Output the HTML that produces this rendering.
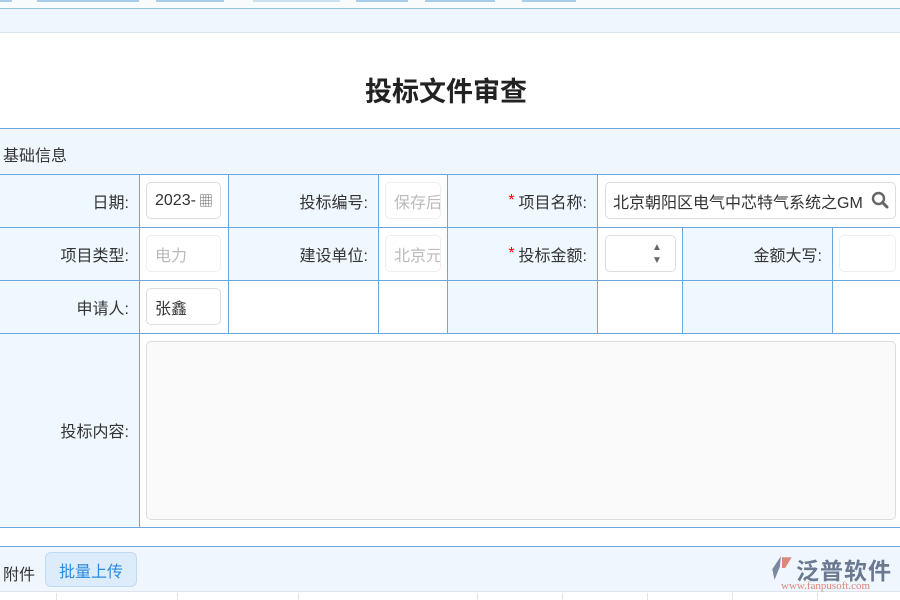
<!DOCTYPE html>
<html><head><meta charset="utf-8"><style>
*{box-sizing:border-box;margin:0;padding:0}
body{width:900px;height:600px;overflow:hidden;background:#fff;font-family:"Liberation Sans","Noto Sans CJK SC",sans-serif;font-size:16px;color:#333;position:relative}
.a{position:absolute}
.lbl{position:absolute;background:#eff7ff;text-align:right;padding-right:10px;display:flex;align-items:center;justify-content:flex-end}
.inp{position:absolute;border:1px solid #ddd;border-radius:5px;background:#fff;display:flex;align-items:center;padding-left:8px;overflow:hidden;white-space:nowrap}
.hl{position:absolute;height:1px;background:#6aa7dc;left:0;width:900px}
.vl{position:absolute;width:1px;background:#6aa7dc}
.st{color:#e00;margin-right:4px}
</style></head><body>
<div class="a" style="left:0;top:0;width:900px;height:8px;background:#f8fbfb"></div>
<div class="a" style="left:0;top:0;width:12px;height:2px;background:#a8cde8"></div>
<div class="a" style="left:37px;top:0;width:102px;height:2px;background:#a8cde8"></div>
<div class="a" style="left:156px;top:0;width:68px;height:2px;background:#a8cde8"></div>
<div class="a" style="left:253px;top:0;width:87px;height:2px;background:#cce0f0"></div>
<div class="a" style="left:356px;top:0;width:52px;height:2px;background:#a8cde8"></div>
<div class="a" style="left:425px;top:0;width:70px;height:2px;background:#a8cde8"></div>
<div class="a" style="left:522px;top:0;width:54px;height:2px;background:#a8cde8"></div>
<div class="a" style="left:0;top:8px;width:900px;height:1px;background:#92c8d8"></div>
<div class="a" style="left:0;top:9px;width:900px;height:24px;background:#f0f6fe;border-bottom:1px solid #dde6ef"></div>
<div class="a" style="left:0;top:70px;width:892px;text-align:center;font-size:27px;font-weight:bold;color:#222">投标文件审查</div>

<div class="a" style="left:0;top:128px;width:900px;height:46px;background:#eff6fe"></div>
<div class="a" style="left:3px;top:142px">基础信息</div>

<!-- row1 -->
<div class="lbl" style="left:0;top:174px;width:139px;height:53px">日期:</div>
<div class="lbl" style="left:228px;top:174px;width:150px;height:53px">投标编号:</div>
<div class="lbl" style="left:447px;top:174px;width:150px;height:53px"><span class="st">*</span>项目名称:</div>
<div class="inp" style="left:146px;top:182px;width:75px;height:37px">2023-<span style="margin-left:3px;color:#666;font-size:14px">▦</span></div>
<div class="inp" style="left:385px;top:182px;width:56px;height:37px;color:#bbb;border-color:#eee">保存后</div>
<div class="inp" style="left:605px;top:182px;width:291px;height:37px;padding-left:7px">北京朝阳区电气中芯特气系统之GM<span style="position:absolute;right:6px;top:8px"><svg width="18" height="18" viewBox="0 0 18 18"><circle cx="7.5" cy="7.5" r="5.5" fill="none" stroke="#666" stroke-width="2.4"/><line x1="11.5" y1="11.5" x2="16" y2="16" stroke="#666" stroke-width="3" stroke-linecap="round"/></svg></span></div>
<!-- row2 -->
<div class="lbl" style="left:0;top:227px;width:139px;height:53px">项目类型:</div>
<div class="lbl" style="left:228px;top:227px;width:150px;height:53px">建设单位:</div>
<div class="lbl" style="left:447px;top:227px;width:150px;height:53px"><span class="st">*</span>投标金额:</div>
<div class="lbl" style="left:682px;top:227px;width:150px;height:53px">金额大写:</div>
<div class="inp" style="left:146px;top:235px;width:75px;height:37px;color:#bbb;border-color:#eee">电力</div>
<div class="inp" style="left:385px;top:235px;width:56px;height:37px;color:#bbb;border-color:#eee">北京元</div>
<div class="inp" style="left:605px;top:235px;width:71px;height:37px"><span style="position:absolute;left:46px;top:5px;font-size:10px;color:#666;line-height:13px">▲<br>▼</span></div>
<div class="inp" style="left:839px;top:235px;width:57px;height:37px;border-color:#eee"></div>
<!-- row3 -->
<div class="lbl" style="left:0;top:280px;width:139px;height:53px">申请人:</div>
<div class="lbl" style="left:447px;top:280px;width:150px;height:53px"></div>
<div class="lbl" style="left:682px;top:280px;width:150px;height:53px"></div>
<div class="inp" style="left:146px;top:288px;width:75px;height:37px">张鑫</div>
<!-- row4 -->
<div class="lbl" style="left:0;top:333px;width:139px;height:194px">投标内容:</div>
<div class="inp" style="left:146px;top:341px;width:750px;height:179px;background:#fafafa"></div>

<div class="hl" style="top:128px"></div>
<div class="hl" style="top:174px"></div>
<div class="hl" style="top:227px"></div>
<div class="hl" style="top:280px"></div>
<div class="hl" style="top:333px"></div>
<div class="hl" style="top:527px"></div>
<div class="vl" style="left:139px;top:174px;height:353px"></div>
<div class="vl" style="left:228px;top:174px;height:159px"></div>
<div class="vl" style="left:378px;top:174px;height:159px"></div>
<div class="vl" style="left:447px;top:174px;height:159px"></div>
<div class="vl" style="left:597px;top:174px;height:159px"></div>
<div class="vl" style="left:682px;top:227px;height:106px"></div>
<div class="vl" style="left:832px;top:227px;height:106px"></div>

<div class="hl" style="top:546px"></div>
<div class="a" style="left:0;top:547px;width:900px;height:45px;background:#eff6fe;border-bottom:1px solid #dde3ea"></div>
<div class="a" style="left:3px;top:561px">附件</div>
<div class="a" style="left:45px;top:552px;width:92px;height:35px;background:#dcecfb;border:1px solid #c2daf0;border-radius:6px;color:#2a8be0;display:flex;align-items:center;justify-content:center">批量上传</div>
<div class="a" style="left:770px;top:554px;width:24px;height:28px"><svg width="24" height="28" viewBox="0 0 22 26"><path d="M2 14 L10 2 L9 12 L4 24 Z" fill="#7a8aa0"/><path d="M11 3 L20 3 L14 13 L11 13 Z" fill="#d9887a"/></svg></div>
<div class="a" style="left:796px;top:552px;font-size:23px;color:#6a7890;font-weight:bold;letter-spacing:1px">泛普软件</div>
<div class="a" style="left:781px;top:580px;font-size:11px;color:#d9887a;font-family:'Liberation Serif',serif">www.fanpusoft.com</div>
<div class="a" style="top:593px;left:56px;width:1px;height:7px;background:#e3e3e3"></div>
<div class="a" style="top:593px;left:177px;width:1px;height:7px;background:#e3e3e3"></div>
<div class="a" style="top:593px;left:298px;width:1px;height:7px;background:#e3e3e3"></div>
<div class="a" style="top:593px;left:477px;width:1px;height:7px;background:#e3e3e3"></div>
<div class="a" style="top:593px;left:562px;width:1px;height:7px;background:#e3e3e3"></div>
<div class="a" style="top:593px;left:647px;width:1px;height:7px;background:#e3e3e3"></div>
<div class="a" style="top:593px;left:732px;width:1px;height:7px;background:#e3e3e3"></div>
<div class="a" style="top:593px;left:817px;width:1px;height:7px;background:#e3e3e3"></div>
</body></html>
